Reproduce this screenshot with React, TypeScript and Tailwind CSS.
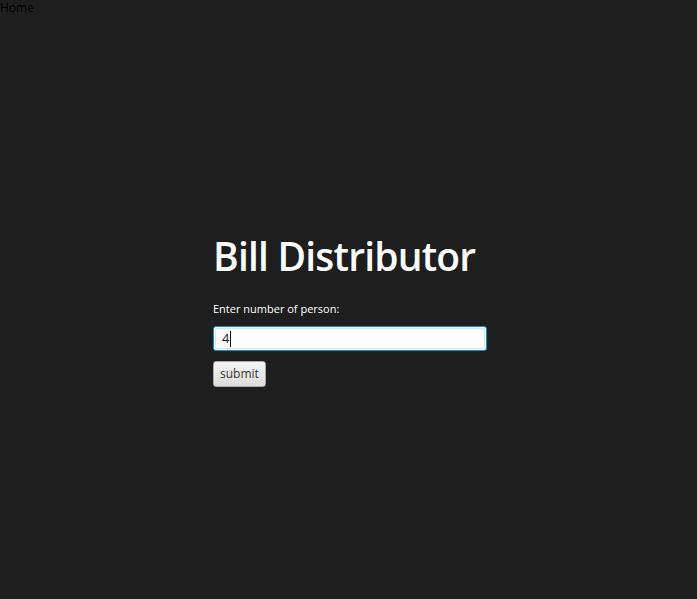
const App = () => {
  return (
    <div className="min-h-[599px] w-full bg-[#1e1e1e] font-['Open_Sans',sans-serif]">
      <div className="text-[12px] leading-[16px] text-black">Home</div>
      <div className="pl-[213px] pt-[211px]">
        <h1 className="text-[39px] leading-[57px] font-semibold text-white tracking-[-0.8px]">Bill Distributor</h1>
        <p className="mt-[17px] text-[11px] leading-[16px] text-white">Enter number of person:</p>
        <div className="mt-[9px] w-[274px] h-[25px] rounded-[3px] border border-[#0093c6] bg-white p-[1px]">
          <div className="h-full w-full rounded-[2px] border border-[#c6ecfa] bg-white flex items-center pl-[6px] text-[13px] text-[#222]">
            4<span className="ml-[1px] inline-block h-[16px] w-[1px] bg-black" />
          </div>
        </div>
        <button className="mt-[10px] h-[26px] px-[6px] rounded-[3px] border border-[#a8a8a8] bg-gradient-to-b from-[#f6f6f6] to-[#dcdcdc] text-[12px] text-[#333]">
          submit
        </button>
      </div>
    </div>
  );
};

export default App;
